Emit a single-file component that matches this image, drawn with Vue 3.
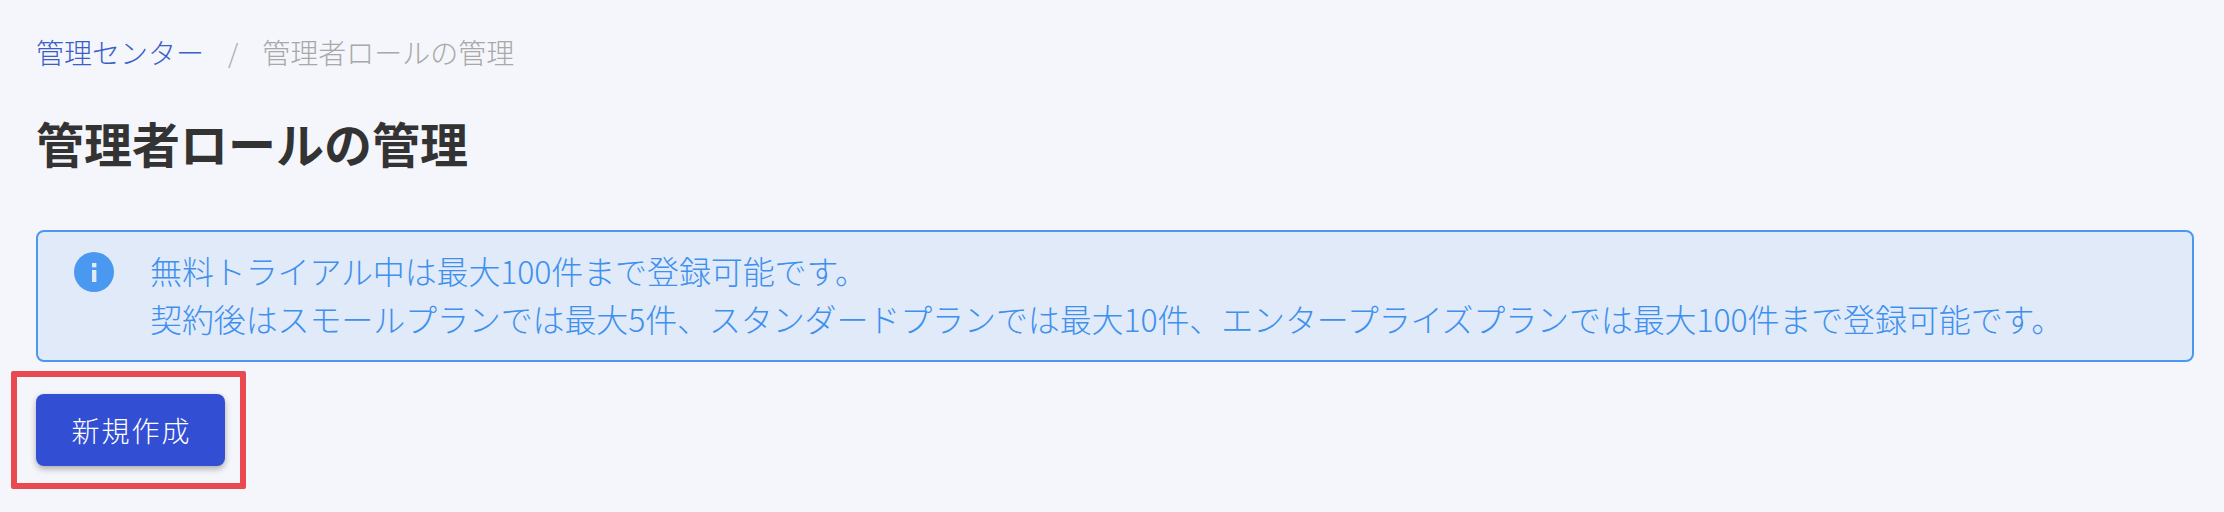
<script setup>
const crumbs = { parent: '管理センター', current: '管理者ロールの管理' }
const notices = [
  '無料トライアル中は最大100件まで登録可能です。',
  '契約後はスモールプランでは最大5件、スタンダードプランでは最大10件、エンタープライズプランでは最大100件まで登録可能です。'
]
</script>

<template>
  <div class="page">
    <nav class="breadcrumb">
      <a class="crumb-link">{{ crumbs.parent }}</a>
      <span class="crumb-sep">/</span>
      <span class="crumb-current">{{ crumbs.current }}</span>
    </nav>
    <h1 class="title">{{ crumbs.current }}</h1>
    <div class="alert">
      <svg class="alert-icon" viewBox="0 0 40 40">
        <circle cx="20" cy="20" r="20" fill="#4a98f0" />
        <rect x="18" y="11" width="4.4" height="4.4" fill="#e0eaf9" />
        <rect x="18" y="18" width="4.4" height="12" fill="#e0eaf9" />
      </svg>
      <div class="alert-text">
        <p v-for="line in notices" :key="line">{{ line }}</p>
      </div>
    </div>
    <div class="actions">
      <button class="btn-create">新規作成</button>
      <div class="highlight"></div>
    </div>
  </div>
</template>

<style scoped>
.page {
  box-sizing: border-box;
  width: 2224px;
  height: 512px;
  padding: 0 30px 0 36px;
  background: #f4f6fb;
  font-family: "Noto Sans CJK JP", "Liberation Sans", sans-serif;
  overflow: hidden;
}

.breadcrumb {
  display: flex;
  align-items: center;
  height: 40px;
  padding-top: 32px;
  font-size: 28px;
  line-height: 40px;
}

.crumb-link {
  color: #3a60c8;
  font-weight: 300;
}

.crumb-sep {
  margin: 0 24px;
  color: #aaaaaa;
  font-weight: 300;
  font-size: 26px;
}

.crumb-current {
  color: #a8a8a8;
  font-weight: 300;
}

.title {
  margin: 34px 0 0;
  height: 124px;
  font-size: 48px;
  line-height: 72px;
  font-weight: 700;
  color: #333333;
}

.alert {
  box-sizing: border-box;
  display: flex;
  align-items: flex-start;
  width: 2158px;
  height: 132px;
  padding: 14px 36px;
  border: 2px solid #4a98f0;
  border-radius: 8px;
  background: #e0eaf9;
}

.alert-icon {
  flex: none;
  width: 40px;
  height: 40px;
  margin-top: 6px;
}

.alert-text {
  margin-left: 36px;
  color: #3f90ee;
  font-size: 32px;
  font-weight: 300;
  line-height: 48px;
  letter-spacing: -0.12px;
}

.alert-text p {
  margin: 0;
}

.actions {
  position: relative;
  margin-top: 32px;
}

.btn-create {
  display: block;
  width: 189px;
  height: 72px;
  padding: 0 0 0 2px;
  border: none;
  border-radius: 8px;
  background: #324fd4;
  color: #ffffff;
  font-family: inherit;
  font-size: 28px;
  font-weight: 300;
  letter-spacing: 2px;
  box-shadow: 0 3px 6px rgba(0, 0, 0, 0.3);
}

.highlight {
  position: absolute;
  left: -25px;
  top: -23px;
  width: 235px;
  height: 118px;
  box-sizing: border-box;
  border: 6px solid #e84a50;
  border-radius: 2px;
}
</style>
